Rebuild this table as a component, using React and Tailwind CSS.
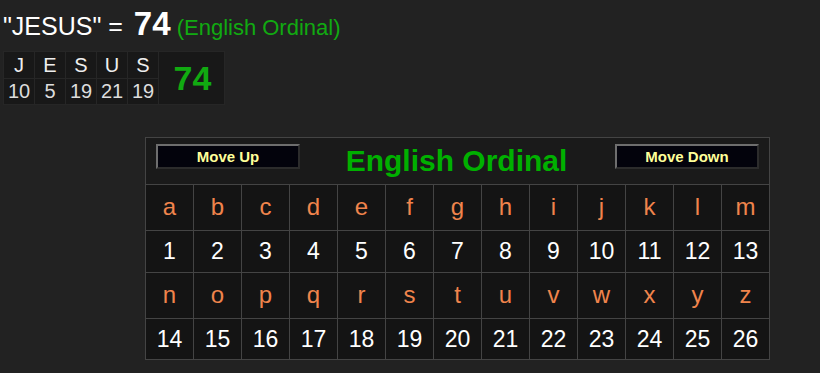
import React from "react";

const word = [
  { ch: "J", val: 10 },
  { ch: "E", val: 5 },
  { ch: "S", val: 19 },
  { ch: "U", val: 21 },
  { ch: "S", val: 19 },
];

const alphabet = "abcdefghijklmnopqrstuvwxyz".split("");

function Button({ children }) {
  return (
    <button className="w-[144px] h-[25px] bg-[#03030c] border-2 border-t-[#6e6e6e] border-l-[#6e6e6e] border-b-[#2c2c2c] border-r-[#2c2c2c] text-[15px] font-bold text-[#ffff99] leading-none">
      {children}
    </button>
  );
}

function LetterRow({ letters }) {
  return (
    <div className="flex">
      {letters.map((l) => (
        <div
          key={l}
          className="w-[48px] h-[46px] border-r border-b border-[#444] bg-[#141414] flex items-center justify-center text-[24px] text-[#f0844c] pb-[2px]"
        >
          {l}
        </div>
      ))}
    </div>
  );
}

function NumberRow({ letters, offset, h }) {
  return (
    <div className="flex">
      {letters.map((l, i) => (
        <div
          key={l}
          className={`w-[48px] ${h} border-r border-b border-[#444] bg-[#141414] flex items-center justify-center text-[23px] text-white`}
        >
          {offset + i + 1}
        </div>
      ))}
    </div>
  );
}

export default function App() {
  const first = alphabet.slice(0, 13);
  const second = alphabet.slice(13);

  return (
    <div className="w-[820px] h-[373px] bg-[#222222] font-['Liberation_Sans',Arial,sans-serif] overflow-hidden">
      {/* headline */}
      <div className="pl-[3px] pt-[8px] h-[51px] leading-[32px] whitespace-nowrap">
        <span className="text-[25px] text-white">"JESUS" = </span>
        <span className="text-[33px] font-bold text-white ml-[4px]">74</span>
        <span className="text-[22px] text-[#11aa11]"> (English Ordinal)</span>
      </div>

      {/* per-letter breakdown */}
      <div className="ml-[3px] flex w-[222px] h-[54px] bg-[#262626] p-px gap-px">
        <div className="grid grid-cols-5 grid-rows-2 gap-px">
          {word.map((w, i) => (
            <div
              key={"c" + i}
              className="w-[30px] bg-[#181818] flex items-center justify-center text-[20px] text-[#eeeeee] leading-none pt-px"
            >
              {w.ch}
            </div>
          ))}
          {word.map((w, i) => (
            <div
              key={"v" + i}
              className="w-[30px] bg-[#181818] flex items-center justify-center text-[20px] text-[#dddddd] leading-none"
            >
              {w.val}
            </div>
          ))}
        </div>
        <div className="flex-1 bg-[#181818] flex items-center justify-center text-[34px] font-bold text-[#11aa11] pl-[2px]">
          74
        </div>
      </div>

      {/* cipher chart */}
      <div className="ml-[145px] mt-[32px] w-[625px] border-l border-t border-[#444]">
        <div className="h-[47px] border-r border-b border-[#444] bg-[#1a1a1a] flex items-start justify-between px-[10px] pt-[6px]">
          <Button>Move Up</Button>
          <div className="text-[30px] font-bold text-[#00b000] leading-[36px] -mt-[1px] pr-[2px]">
            English Ordinal
          </div>
          <Button>Move Down</Button>
        </div>
        <LetterRow letters={first} />
        <NumberRow letters={first} offset={0} h="h-[42px]" />
        <LetterRow letters={second} />
        <NumberRow letters={second} offset={13} h="h-[41px]" />
      </div>
    </div>
  );
}
